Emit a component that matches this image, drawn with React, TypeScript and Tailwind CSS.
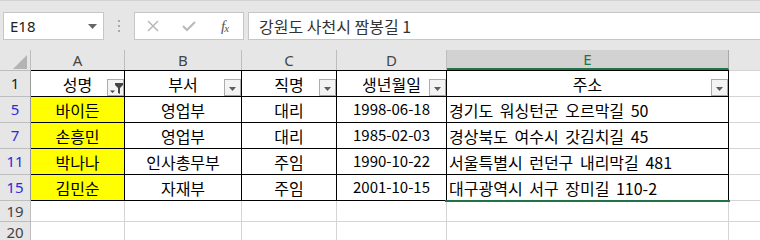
import React from 'react';

const COLS = ['w-[94px]', 'w-[117px]', 'w-[95px]', 'w-[110px]', 'w-[282px]'];
const LETTERS = ['A', 'B', 'C', 'D', 'E'];

const HEADERS = ['성명', '부서', '직명', '생년월일', '주소'];

const ROWS = [
    { n: '5', cells: ['바이든', '영업부', '대리', '1998-06-18', '경기도 워싱턴군 오르막길 50'] },
    { n: '7', cells: ['손흥민', '영업부', '대리', '1985-02-03', '경상북도 여수시 갓김치길 45'] },
    { n: '11', cells: ['박나나', '인사총무부', '주임', '1990-10-22', '서울특별시 런던구 내리막길 481'] },
    { n: '15', cells: ['김민순', '자재부', '주임', '2001-10-15', '대구광역시 서구 장미길 110-2'] },
];

const cellFont = { fontFamily: '"Noto Sans CJK KR", "Noto Sans", sans-serif' };
const uiFont = { fontFamily: '"Noto Sans", "Noto Sans CJK KR", sans-serif' };

const FilterButton: React.FC<{ active?: boolean }> = ({ active }) => (
    <div className="absolute right-0 bottom-0 w-[17px] h-[17px] border border-[#acacac] bg-[#f3f3f3] flex items-center justify-center">
        {active ? (
            <svg width="15" height="15" viewBox="0 0 15 15">
                <polygon points="2,10.5 7,10.5 4.5,13" fill="#444" />
                <polygon points="7,3 15,3 15,5 12,8 12,14 10,13 10,8 7,5" fill="#444" />
            </svg>
        ) : (
            <svg width="9" height="6" viewBox="0 0 9 6" className="mt-[2px]">
                <polygon points="1,1 8,1 4.5,5" fill="#5c5c5c" />
            </svg>
        )}
    </div>
);

const FormulaBar: React.FC = () => (
    <div className="h-[50px] bg-[#e6e6e6] border-t border-[#d2d2d2] pt-[11px] flex items-start">
        <div className="ml-[3px] w-[101px] h-[28px] bg-white border border-[#c6c6c6] flex items-center pl-[6px] text-[15px] text-[#222]" style={uiFont}>
            E18
            <svg width="9" height="5" viewBox="0 0 9 5" className="ml-auto mr-[6px]">
                <polygon points="0,0 9,0 4.5,5" fill="#666" />
            </svg>
        </div>
        <div className="w-[30px] h-[28px] flex flex-col items-center justify-center gap-[3px]">
            <span className="w-[2px] h-[2px] bg-[#a8a8a8]" />
            <span className="w-[2px] h-[2px] bg-[#a8a8a8]" />
            <span className="w-[2px] h-[2px] bg-[#a8a8a8]" />
        </div>
        <div className="w-[110px] h-[28px] bg-white border border-[#c6c6c6] flex items-center">
            <div className="w-[36px] flex justify-center">
                <svg width="12" height="12" viewBox="0 0 12 12">
                    <path d="M1 1 L11 11 M11 1 L1 11" stroke="#b8b8b8" strokeWidth="1.5" />
                </svg>
            </div>
            <div className="w-[36px] flex justify-center">
                <svg width="14" height="12" viewBox="0 0 14 12">
                    <path d="M1 6 L5 10 L13 2" stroke="#b8b8b8" strokeWidth="2" fill="none" />
                </svg>
            </div>
            <div className="w-[36px] flex justify-center items-end text-[#555] italic leading-none" style={{ fontFamily: '"Liberation Serif", serif' }}>
                <span className="text-[15px]">f</span>
                <span className="text-[11px] -ml-[1px]">x</span>
            </div>
        </div>
        <div className="ml-[4px] flex-1 h-[28px] bg-white border border-r-0 border-[#c6c6c6] flex items-center pl-[10px] text-[16px] text-[#333]" style={cellFont}>
            강원도 사천시 짬봉길 1
        </div>
    </div>
);

const ColumnHeaders: React.FC = () => (
    <div className="h-[20px] flex bg-[#e6e6e6]">
        <div className="w-[31px] border-r border-[#bdbdbd] relative">
            <svg width="14" height="14" viewBox="0 0 14 14" className="absolute right-[3px] bottom-[1px]">
                <polygon points="14,0 14,14 0,14" fill="#b4b4b4" />
            </svg>
        </div>
        {LETTERS.map((l, i) => (
            <div
                key={l}
                className={`${COLS[i]} border-r flex items-center justify-center text-[15px] ${l === 'E' ? 'bg-[#d2d2d2] text-[#217346] border-b-2 border-b-[#217346] border-r-[#a8a8a8]' : 'text-[#444] border-[#bdbdbd]'}`}
                style={uiFont}
            >
                {l}
            </div>
        ))}
        <div className="flex-1" />
    </div>
);

const App: React.FC = () => {
    return (
        <div className="w-[760px] h-[240px] overflow-hidden bg-white">
            <FormulaBar />
            <ColumnHeaders />

            {/* header row 1 */}
            <div className="h-[27px] flex">
                <div className="w-[31px] bg-[#e6e6e6] border-r border-r-[#9a9a9a] border-b border-b-[#bdbdbd] border-t border-t-[#bdbdbd] flex items-center justify-center text-[15px] text-[#222]" style={uiFont}>
                    1
                </div>
                {HEADERS.map((h, i) => (
                    <div key={h} className={`${COLS[i]} relative border-t border-r border-b border-black flex items-center justify-center text-[16px] text-black`} style={cellFont}>
                        {h}
                        <FilterButton active={i === 0} />
                    </div>
                ))}
                <div className="flex-1 border-t border-b border-[#d4d4d4]" />
            </div>

            {ROWS.map(row => (
                <div key={row.n} className="h-[26px] flex">
                    <div className="w-[31px] bg-[#e6e6e6] border-r border-r-[#9a9a9a] border-b border-b-[#bdbdbd] flex items-center justify-center text-[15px] text-[#2b2bd8]" style={uiFont}>
                        {row.n}
                    </div>
                    {row.cells.map((c, i) => (
                        <div
                            key={i}
                            className={`${COLS[i]} relative border-r border-b border-black flex items-center text-black ${i === 3 ? 'text-[15px]' : 'text-[16px]'} ${i === 0 ? 'bg-[#ffff00]' : ''} ${i === 4 ? 'justify-start pl-[2px] [word-spacing:3px]' : 'justify-center'}`}
                            style={cellFont}
                        >
                            {c}
                            {i === 4 && row.n === '15' && (
                                <div className="absolute left-[-2px] right-[-2px] bottom-[-2px] h-[2px] bg-[#217346]" />
                            )}
                        </div>
                    ))}
                    <div className="flex-1 border-b border-[#d4d4d4]" />
                </div>
            ))}

            {['19', '20'].map(n => (
                <div key={n} className="h-[21px] flex">
                    <div className="w-[31px] bg-[#e6e6e6] border-r border-b border-[#bdbdbd] flex items-center justify-center text-[15px] text-[#444]" style={uiFont}>
                        {n}
                    </div>
                    {COLS.map((w, i) => (
                        <div key={i} className={`${w} border-r border-b border-[#d4d4d4]`} />
                    ))}
                    <div className="flex-1 border-b border-[#d4d4d4]" />
                </div>
            ))}
        </div>
    );
};

export default App;
